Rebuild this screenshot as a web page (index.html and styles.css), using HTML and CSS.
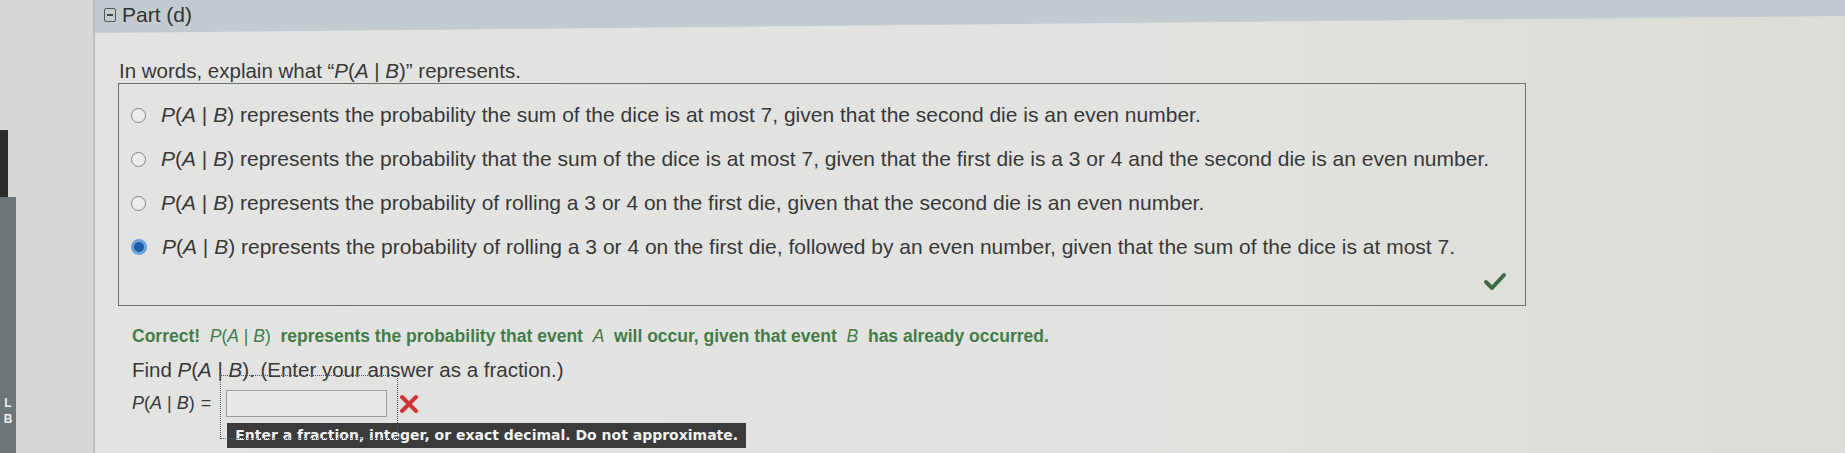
FILE: index.html
```html
<!DOCTYPE html>
<html lang="en">

<head>
    <meta charset="UTF-8">
    <meta name="viewport" content="width=device-width, initial-scale=1.0">
    <title>Part (d)</title>
    <link rel="stylesheet" href="styles.css">
</head>

<body>
    <div class="screen">
        <div class="side">
            <div class="edge-dark"></div>
            <div class="edge-grey"><span>L</span><span>B</span></div>
        </div>

        <div class="main">
            <div class="part-head">
                <span class="toggle"></span>
                <span class="part-title">Part (d)</span>
            </div>

            <div class="part-body">
                <p class="question">In words, explain what “<span class="m"><i>P</i>(<i>A</i> | <i>B</i>)</span>” represents.</p>

                <div class="choices">
                    <label class="choice">
                        <span class="radio"></span>
                        <span><span class="m"><i>P</i>(<i>A</i> | <i>B</i>)</span> represents the probability the sum of the dice is at most 7, given that the second die is an even number.</span>
                    </label>
                    <label class="choice">
                        <span class="radio"></span>
                        <span><span class="m"><i>P</i>(<i>A</i> | <i>B</i>)</span> represents the probability that the sum of the dice is at most 7, given that the first die is a 3 or 4 and the second die is an even number.</span>
                    </label>
                    <label class="choice">
                        <span class="radio"></span>
                        <span><span class="m"><i>P</i>(<i>A</i> | <i>B</i>)</span> represents the probability of rolling a 3 or 4 on the first die, given that the second die is an even number.</span>
                    </label>
                    <label class="choice">
                        <span class="radio checked"></span>
                        <span><span class="m"><i>P</i>(<i>A</i> | <i>B</i>)</span> represents the probability of rolling a 3 or 4 on the first die, followed by an even number, given that the sum of the dice is at most 7.</span>
                    </label>
                    <div class="result">
                        <svg class="tick" width="24" height="20" viewBox="0 0 24 20">
                            <path d="M3 11 L9 17 L21 4" fill="none" stroke="#3d6b3f" stroke-width="4" stroke-linecap="round" stroke-linejoin="round"/>
                        </svg>
                    </div>
                </div>

                <div class="feedback">
                    <p class="correct">Correct!&nbsp; <span class="m"><i>P</i>(<i>A</i> | <i>B</i>)</span>&nbsp; represents the probability that event&nbsp; <i class="v">A</i>&nbsp; will occur, given that event&nbsp; <i class="v">B</i>&nbsp; has already occurred.</p>
                    <p class="find">Find <span class="m"><i>P</i>(<i>A</i> | <i>B</i>)</span>. (Enter your answer as a fraction.)</p>

                    <div class="answer">
                        <span class="m"><i>P</i>(<i>A</i> | <i>B</i>)</span>
                        <span class="eq">=</span>
                        <span class="field">
                            <input type="text" class="answer-input">
                            <span class="tip">Enter a fraction, integer, or exact decimal. Do not approximate.</span>
                        </span>
                        <svg class="wrong" width="22" height="22" viewBox="0 0 22 22">
                            <path d="M4 4 L18 18 M18 4 L4 18" stroke="#d23434" stroke-width="4" stroke-linecap="round"/>
                        </svg>
                        <span class="focus-ring"></span>
                    </div>
                </div>
            </div>
        </div>
    </div>
</body>

</html>
```

FILE: styles.css
```css
body {
    margin: 0;
    font-family: "Liberation Sans", Arial, sans-serif;
    background-color: #d8d9d6;
    color: #383838;
}

p {
    margin: 0;
}

.screen {
    display: flex;
    height: 453px;
    overflow: hidden;
}

/* strip of the window behind, on the far left */
.side {
    width: 93px;
    display: flex;
    flex-direction: column;
}

.edge-dark {
    margin-top: 130px;
    width: 8px;
    height: 67px;
    background-color: #2b2d2d;
}

.edge-grey {
    flex: 1;
    width: 16px;
    background-color: #6c7676;
    display: flex;
    flex-direction: column;
    justify-content: flex-end;
    align-items: center;
    padding-bottom: 26px;
    box-sizing: border-box;
    color: #eee;
    font-size: 12px;
    font-weight: bold;
    line-height: 16px;
}

.main {
    flex: 1;
    background: linear-gradient(to right, #e3e4e2 0%, #e2e3e0 60%, #dcdcd6 100%);
    border-left: 2px solid #bdbebb;
}

.part-head {
    height: 33px;
    background-color: #c2ccd0;
    clip-path: polygon(0 0, 100% 0, 100% 16px, 0 33px);
    display: flex;
    align-items: center;
    gap: 6px;
    padding: 0 0 4px 9px;
    box-sizing: border-box;
}

.toggle {
    width: 10px;
    height: 12px;
    border: 1px solid #555;
    border-radius: 2px;
    position: relative;
}

.toggle::after {
    content: "";
    position: absolute;
    left: 2px;
    right: 2px;
    top: 5px;
    height: 2px;
    background-color: #444;
}

.part-title {
    font-size: 21px;
    color: #333;
}

.part-body {
    padding-left: 23px;
}

.m i,
.v {
    font-style: italic;
}

.question {
    font-size: 20.5px;
    line-height: 22px;
    margin: 27px 0 0 1px;
}

.choices {
    width: 1408px;
    box-sizing: border-box;
    margin-top: 1px;
    border: 1px solid #6e6e6c;
    padding: 9px 0 12px 12px;
}

.choice {
    display: flex;
    align-items: center;
    gap: 15px;
    height: 44px;
    font-size: 21px;
}

.radio {
    width: 13px;
    height: 13px;
    border: 1.5px solid #868686;
    border-radius: 50%;
    background-color: #ebebea;
    flex-shrink: 0;
}

.radio.checked {
    border: 3px solid #6aa3da;
    background-color: #1d5aa8;
    width: 10px;
    height: 10px;
}

.result {
    display: flex;
    justify-content: flex-end;
    align-items: center;
    height: 24px;
    padding-right: 18px;
}

.feedback {
    padding-left: 14px;
}

.correct {
    margin-top: 19px;
    font-size: 17.5px;
    line-height: 22px;
    font-weight: bold;
    color: #437c49;
}

.correct .m,
.correct .v {
    font-weight: normal;
}

.find {
    margin-top: 11px;
    font-size: 20.5px;
    line-height: 24px;
}

.answer {
    position: relative;
    display: flex;
    align-items: center;
    margin-top: 8px;
    height: 27px;
    font-size: 18px;
}

.eq {
    margin-left: 6px;
}

.field {
    position: relative;
    margin-left: 15px;
}

.answer-input {
    display: block;
    width: 161px;
    height: 27px;
    box-sizing: border-box;
    border: 1px solid #9c9c9a;
    background-color: #e9e9e7;
    margin: 0;
}

.tip {
    position: absolute;
    left: 1px;
    top: 33px;
    height: 25px;
    padding: 0 8px;
    background-color: #3a3b3a;
    color: #f2f2f2;
    font-family: "DejaVu Sans", Verdana, sans-serif;
    font-size: 14px;
    font-weight: bold;
    line-height: 25px;
    white-space: nowrap;
}

.wrong {
    margin-left: 11px;
}

.focus-ring {
    position: absolute;
    left: 88px;
    top: -15px;
    width: 176px;
    height: 62px;
    border: 1px dotted #4c5670;
    pointer-events: none;
}
```
